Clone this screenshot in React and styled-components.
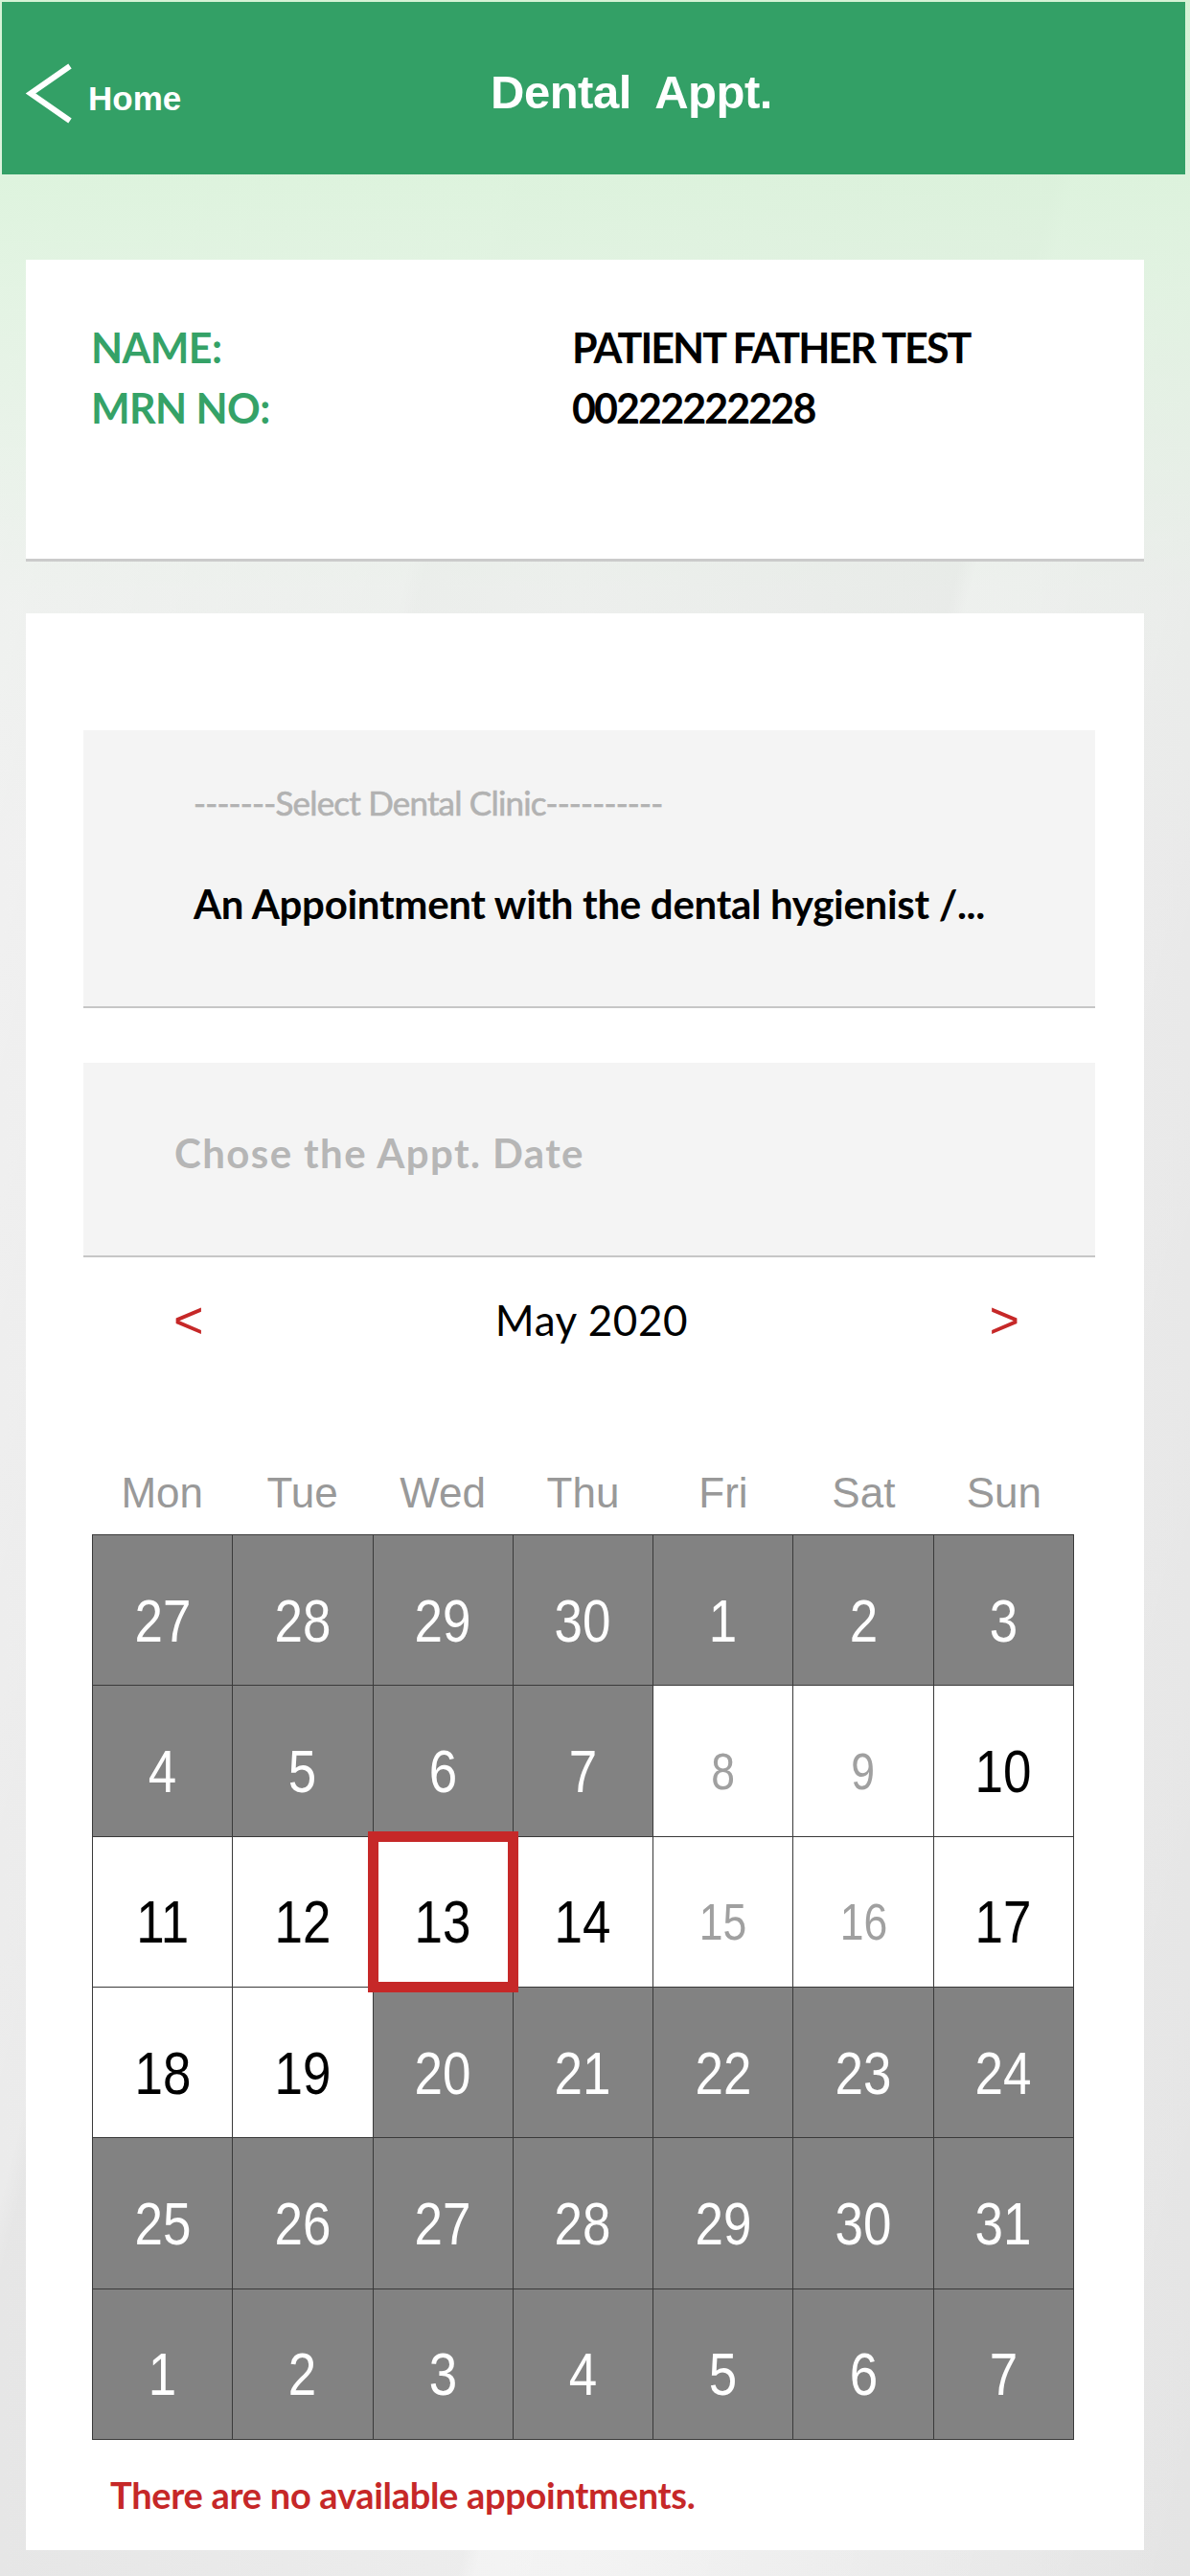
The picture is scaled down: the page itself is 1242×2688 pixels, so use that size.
import React from 'react';
import styled, { createGlobalStyle } from 'styled-components';

const GlobalStyle = createGlobalStyle`
  * {
    box-sizing: border-box;
  }
  body {
    margin: 0;
    background: #ffffff;
    font-family: 'Liberation Sans', Arial, sans-serif;
  }
`;

const weekDays = ['Mon', 'Tue', 'Wed', 'Thu', 'Fri', 'Sat', 'Sun'];

// off = past / other month, open = bookable, closed = weekend without slots
const monthRows = [
  [[27, 'off'], [28, 'off'], [29, 'off'], [30, 'off'], [1, 'off'], [2, 'off'], [3, 'off']],
  [[4, 'off'], [5, 'off'], [6, 'off'], [7, 'off'], [8, 'closed'], [9, 'closed'], [10, 'open']],
  [[11, 'open'], [12, 'open'], [13, 'open', true], [14, 'open'], [15, 'closed'], [16, 'closed'], [17, 'open']],
  [[18, 'open'], [19, 'open'], [20, 'off'], [21, 'off'], [22, 'off'], [23, 'off'], [24, 'off']],
  [[25, 'off'], [26, 'off'], [27, 'off'], [28, 'off'], [29, 'off'], [30, 'off'], [31, 'off']],
  [[1, 'off'], [2, 'off'], [3, 'off'], [4, 'off'], [5, 'off'], [6, 'off'], [7, 'off']],
];

export default function App() {
  return (
    <>
      <GlobalStyle />
      <Page>
        <Header>
          <BackButton>
            <svg width="52" height="64" viewBox="0 0 52 64">
              <polyline points="47,3 6,31.5 47,60" fill="none" stroke="#ffffff" strokeWidth="6" />
            </svg>
            <BackLabel>Home</BackLabel>
          </BackButton>
          <Title>Dental  Appt.</Title>
        </Header>

        <PatientCard>
          <InfoGrid>
            <InfoLabel>NAME:</InfoLabel>
            <InfoValue>PATIENT FATHER TEST</InfoValue>
            <InfoLabel>MRN NO:</InfoLabel>
            <InfoValue>00222222228</InfoValue>
          </InfoGrid>
        </PatientCard>

        <BookingCard>
          <SelectBox>
            <Placeholder>-------Select Dental Clinic----------</Placeholder>
            <SelectedClinic>An Appointment with the dental hygienist /...</SelectedClinic>
          </SelectBox>

          <DateBox>
            <DatePrompt>Chose the Appt. Date</DatePrompt>
          </DateBox>

          <MonthNav>
            <NavArrow>&lt;</NavArrow>
            <MonthLabel>May 2020</MonthLabel>
            <NavArrow>&gt;</NavArrow>
          </MonthNav>

          <WeekRow>
            {weekDays.map((d) => (
              <WeekDay key={d}>{d}</WeekDay>
            ))}
          </WeekRow>

          <CalendarGrid>
            {monthRows.flat().map(([day, tone, selected], i) => (
              <DayCell key={i} $tone={tone}>
                <DayNumber $tone={tone}>{day}</DayNumber>
                {selected && <SelectedFrame />}
              </DayCell>
            ))}
          </CalendarGrid>

          <NoSlots>There are no available appointments.</NoSlots>
        </BookingCard>
      </Page>
    </>
  );
}

const Page = styled.div`
  min-height: 2688px;
  overflow: hidden;
  background-color: #ececec;
  background-image:
    linear-gradient(
      180deg,
      rgba(212, 243, 212, 0.95) 0px,
      rgba(222, 244, 222, 0.75) 300px,
      rgba(234, 241, 234, 0.35) 620px,
      rgba(236, 236, 236, 0) 900px
    ),
    linear-gradient(
      104deg,
      rgba(255, 255, 255, 0.55) 0%,
      rgba(255, 255, 255, 0.2) 30%,
      rgba(255, 255, 255, 0) 31%,
      rgba(255, 255, 255, 0) 60%,
      rgba(255, 255, 255, 0.35) 61%,
      rgba(255, 255, 255, 0) 100%
    ),
    linear-gradient(90deg, #e6e6e6 0%, #eeeeee 48%, #e4e4e4 100%);
  padding-top: 2px;
`;

const Header = styled.header`
  margin: 0 5px 0 2px;
  height: 180px;
  background: #33a066;
  display: grid;
  grid-template-columns: 486px 1fr;
  align-items: start;
  padding: 64px 0 0 24px;
`;

const BackButton = styled.div`
  display: flex;
  align-items: flex-start;
  gap: 14px;
`;

const BackLabel = styled.span`
  margin-top: 19px;
  font-family: 'Liberation Sans', Arial, sans-serif;
  font-weight: 700;
  font-size: 35px;
  line-height: 1;
  color: #ffffff;
`;

const Title = styled.h1`
  margin: 6px 0 0;
  font-family: 'Liberation Sans', Arial, sans-serif;
  font-weight: 700;
  font-size: 49px;
  line-height: 1;
  color: #ffffff;
  white-space: pre;
  letter-spacing: -0.5px;
`;

const PatientCard = styled.section`
  margin: 89px 48px 0 27px;
  height: 315px;
  background: #ffffff;
  border-bottom: 3px solid #cbcbcb;
  padding: 60px 0 0 68px;
`;

const InfoGrid = styled.div`
  display: grid;
  grid-template-columns: 502px auto;
  font-family: Lato, 'Open Sans', sans-serif;
  font-weight: 700;
  font-size: 43px;
  line-height: 63px;
`;

const InfoLabel = styled.span`
  color: #35a267;
  letter-spacing: -0.6px;
`;

const InfoValue = styled.span`
  color: #000000;
  letter-spacing: -1.9px;
`;

const BookingCard = styled.section`
  margin: 54px 48px 0 27px;
  background: #ffffff;
  padding: 122px 51px 39px 60px;
`;

const FieldBox = styled.div`
  background: #f4f4f4;
  border-bottom: 2px solid #c6c6c6;
  font-family: Lato, 'Open Sans', sans-serif;
  line-height: 1;
`;

const SelectBox = styled(FieldBox)`
  height: 290px;
  padding: 58px 0 0 115px;
  display: flex;
  flex-direction: column;
`;

const Placeholder = styled.span`
  font-size: 35px;
  color: #b2b2b2;
  letter-spacing: -0.8px;
  -webkit-text-stroke: 0.6px #b2b2b2;
`;

const SelectedClinic = styled.span`
  margin-top: 67px;
  font-size: 42px;
  font-weight: 700;
  color: #000000;
  letter-spacing: -0.3px;
`;

const DateBox = styled(FieldBox)`
  margin-top: 57px;
  height: 203px;
  padding: 73px 0 0 95px;
`;

const DatePrompt = styled.span`
  font-size: 42px;
  font-weight: 700;
  color: #b6b6b6;
  letter-spacing: 1.4px;
`;

const MonthNav = styled.div`
  margin-top: 38px;
  height: 54px;
  display: flex;
  align-items: center;
  justify-content: space-between;
  padding: 0 79px 0 94px;
`;

const NavArrow = styled.span`
  font-family: 'Liberation Sans', Arial, sans-serif;
  font-size: 54px;
  line-height: 1;
  color: #c62828;
`;

const MonthLabel = styled.span`
  margin-right: 10px;
  font-family: Lato, 'Open Sans', sans-serif;
  font-size: 44px;
  line-height: 1;
  letter-spacing: 0.6px;
  color: #000000;
`;

const WeekRow = styled.div`
  margin: 132px 0 0 9px;
  width: 1025px;
  display: grid;
  grid-template-columns: repeat(7, 1fr);
`;

const WeekDay = styled.span`
  text-align: center;
  font-family: 'Liberation Sans', Arial, sans-serif;
  font-size: 44px;
  line-height: 1;
  color: #999999;
`;

const CalendarGrid = styled.div`
  margin: 21px 0 0 9px;
  width: 1025px;
  height: 945px;
  display: grid;
  grid-template-columns: repeat(7, 1fr);
  grid-template-rows: repeat(6, 1fr);
  gap: 1px;
  padding: 1px;
  background: #3a3a3a;
`;

const DayCell = styled.div`
  position: relative;
  display: flex;
  align-items: center;
  justify-content: center;
  padding-top: 22px;
  background: ${(p) => (p.$tone === 'off' ? '#828282' : '#ffffff')};
`;

const DayNumber = styled.span`
  display: inline-block;
  font-family: 'Liberation Sans', Arial, sans-serif;
  font-size: ${(p) => (p.$tone === 'closed' ? '53px' : '63px')};
  line-height: 1;
  transform: scaleX(0.84);
  color: ${(p) => (p.$tone === 'off' ? '#ffffff' : p.$tone === 'closed' ? '#a0a0a0' : '#000000')};
`;

const SelectedFrame = styled.div`
  position: absolute;
  inset: -6px;
  border: 11px solid #c62828;
  z-index: 2;
  pointer-events: none;
`;

const NoSlots = styled.p`
  margin: 38px 0 0 28px;
  font-family: Lato, 'Open Sans', sans-serif;
  font-weight: 700;
  font-size: 38px;
  line-height: 1;
  color: #c62828;
  letter-spacing: -0.3px;
`;
